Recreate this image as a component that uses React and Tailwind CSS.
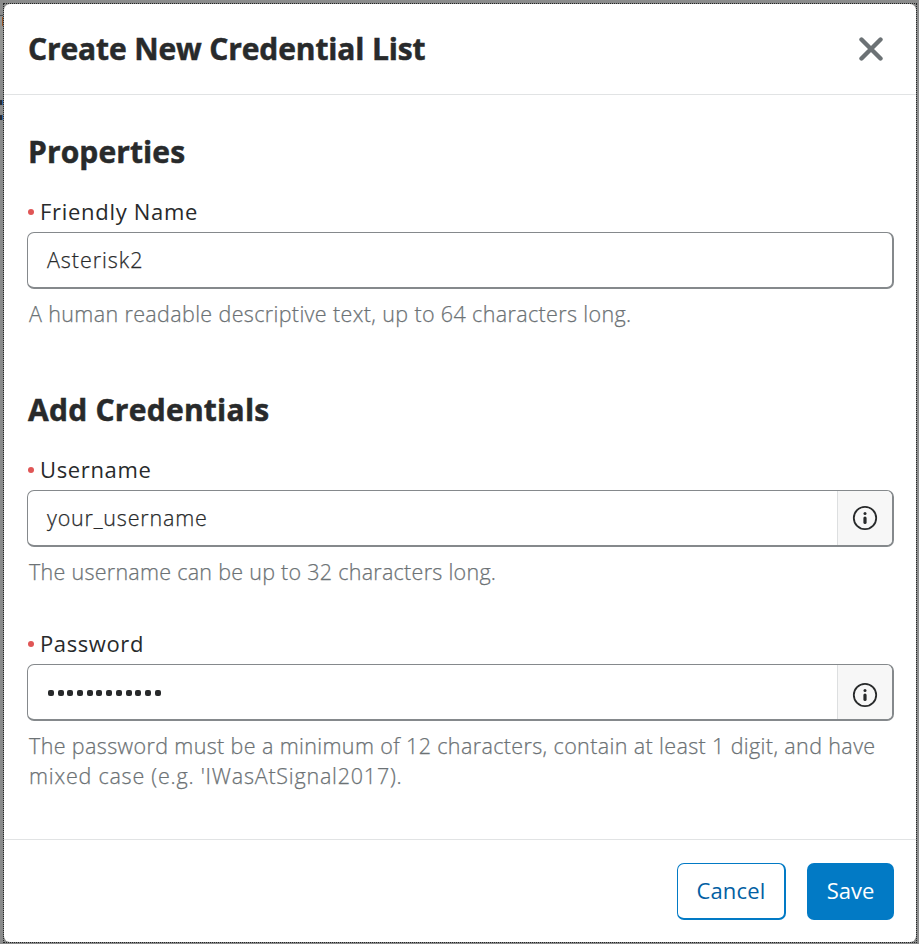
import React from 'react';

function InfoIcon() {
  return (
    <svg width="26" height="26" viewBox="0 0 26 26" fill="none" className="block shrink-0">
      <circle cx="13" cy="13" r="11.2" stroke="#282a2b" strokeWidth="1.8" />
      <circle cx="13" cy="8.6" r="1.5" fill="#282a2b" />
      <path d="M13 13V17.4" stroke="#282a2b" strokeWidth="3.2" strokeLinecap="round" />
    </svg>
  );
}

function Label({ children, tracking }) {
  return (
    <div className="flex h-[30px] items-center text-[22px] leading-[30px] text-[#282a2b]">
      <span className="mr-[6px] ml-px size-[6px] shrink-0 rounded-full bg-[#e05656]" />
      <span className={`pb-[2px] whitespace-nowrap ${tracking}`}>{children}</span>
    </div>
  );
}

function Field({ children, info }) {
  return (
    <div className="mt-[5px] flex h-[57px] overflow-hidden rounded-[7px] border border-r-2 border-b-2 border-[#85898c] bg-white">
      <div className="flex flex-1 items-center pl-[19px] text-[21.5px] leading-[30px] font-light whitespace-nowrap text-[#282a2b] [-webkit-text-stroke:0.25px]">{children}</div>
      {info && (
        <div className={`flex w-[55px] items-center justify-center border-l border-[#dddfe0] bg-[#f7f7f7] ${info}`}>
          <InfoIcon />
        </div>
      )}
    </div>
  );
}

function Heading({ children, tracking }) {
  return <h2 className={`ml-px h-9 text-[30px] leading-9 font-bold whitespace-nowrap [-webkit-text-stroke:0.5px] ${tracking}`}>{children}</h2>;
}

function Help({ children }) {
  return <div className="mt-[10px] ml-[2px] text-[21.5px] leading-[30px] font-light whitespace-nowrap text-[#6c7275] [-webkit-text-stroke:0.25px]">{children}</div>;
}

export default function App() {
  return (
    <div className="relative h-[944px] w-[919px] overflow-hidden bg-[#8a8b8b] pt-[3px] pl-[3px] font-['Open_Sans','Noto_Sans',sans-serif] text-[#282a2b]">
      <div className="absolute top-[15px] left-0 h-[38px] w-[3px] border-t border-[#4b4d50] bg-[#949593]" />
      <div className="absolute top-[17px] left-[2px] h-[9px] w-px bg-[#965629]" />
      <div className="absolute top-[100px] left-0 h-[5px] w-[3px] border-r border-[#3167a5] bg-[#292c35]" />
      <div className="absolute top-[115px] left-0 h-[5px] w-[3px] border-r border-[#3167a5] bg-[#292c35]" />
      <div className="relative h-[940px] w-[914px] border border-dotted border-[#242626]">
        <div className="flex h-[938px] w-[912px] flex-col rounded-[6px] bg-white">
          <header className="flex h-[91px] shrink-0 items-center justify-between border-b border-[#e1e3e4] pr-[33px] pl-[24px]">
            <h1 className="text-[30px] leading-9 font-bold whitespace-nowrap tracking-[-0.13px] [-webkit-text-stroke:0.5px]">
              <span>Create New Credential List</span>
            </h1>
            <svg width="24" height="24" viewBox="0 0 24 24" className="block">
              <path d="M2.5 2.5L21.5 21.5M21.5 2.5L2.5 21.5" stroke="#6c7275" strokeWidth="4.4" strokeLinecap="round" />
            </svg>
          </header>
          <main className="h-[744px] shrink-0 pt-[39px] pr-[22px] pl-[23px]">
            <Heading tracking="tracking-[0.1px]">Properties</Heading>
            <div className="mt-[27px]">
              <Label tracking="tracking-[0.7px]">Friendly Name</Label>
              <Field><span className="tracking-[0.95px]">Asterisk2</span></Field>
              <Help><span className="tracking-[0.36px]">A human readable descriptive text, up to 64 characters long.</span></Help>
            </div>
            <div className="mt-[63px]">
              <Heading tracking="tracking-[0.25px]">Add Credentials</Heading>
            </div>
            <div className="mt-[27px]">
              <Label tracking="tracking-[0.65px]">Username</Label>
              <Field info="pb-0"><span className="tracking-[0.8px]">your_username</span></Field>
              <Help><span className="tracking-[0.27px]">The username can be up to 32 characters long.</span></Help>
            </div>
            <div className="mt-[42px]">
              <Label tracking="tracking-[0.6px]">Password</Label>
              <Field info="pt-[6px]">
                <span className="ml-px mt-px flex gap-[3.7px]">
                  {Array.from({ length: 12 }, (_, i) => (
                    <i key={i} className="size-[6px] rounded-[2px] bg-[#282a2b]" />
                  ))}
                </span>
              </Field>
              <Help>
                <span className="tracking-[0.37px]">The password must be a minimum of 12 characters, contain at least 1 digit, and have</span>
                <br />
                <span className="tracking-[0.78px]">mixed case (e.g. 'IWasAtSignal2017).</span>
              </Help>
            </div>
          </main>
          <footer className="flex h-[103px] shrink-0 justify-end gap-[21px] border-t border-[#e1e3e4] pt-[23px] pr-[22px]">
            <button className="flex h-[57px] w-[109px] items-center justify-center rounded-[7px] border border-r-2 border-b-2 border-[#027ac5] text-[22px] whitespace-nowrap text-[#0260a3]">
              <span className="pb-[2px] tracking-[0.2px]">Cancel</span>
            </button>
            <button className="flex h-[57px] w-[87px] items-center justify-center rounded-[7px] bg-[#027ac5] text-[22px] whitespace-nowrap text-white">
              <span className="pb-[2px]">Save</span>
            </button>
          </footer>
        </div>
      </div>
    </div>
  );
}
